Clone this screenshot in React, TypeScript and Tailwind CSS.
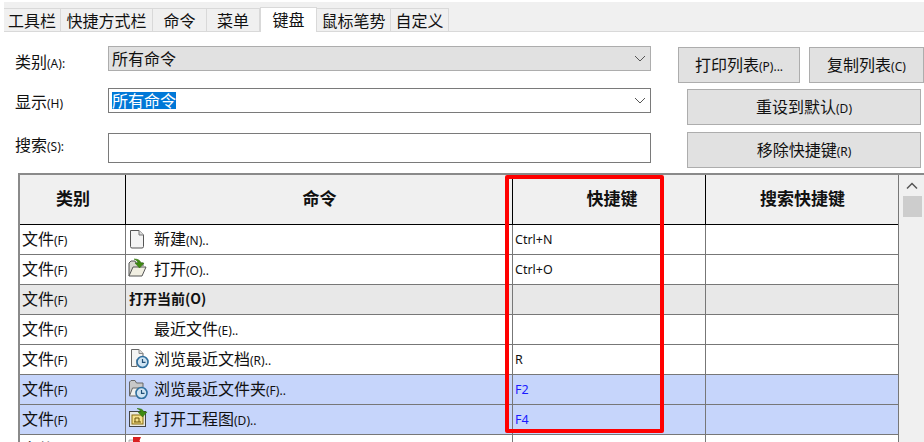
const font = { fontFamily: '"Noto Sans CJK SC", "Noto Sans", sans-serif' };

function L({ cn, en, className = "" }: { cn: string; en?: string; className?: string }) {
  return (
    <span className={`whitespace-nowrap ${className}`}>
      <span className="text-[16px]">{cn}</span>
      {en ? <span className="text-[12px] font-['Noto_Sans']">{en}</span> : null}
    </span>
  );
}

function Chevron() {
  return (
    <svg width="12" height="7" viewBox="0 0 12 7" className="shrink-0 mr-[1px]">
      <path d="M1 1l5 5 5-5" fill="none" stroke="#555" strokeWidth="1" />
    </svg>
  );
}

function PageIcon() {
  return (
    <svg width="18" height="20" viewBox="0 0 18 20" className="-mt-[2px]">
      <path d="M2.500 1.500h8.500l4.500 4.500v11.500a1.500 1.500 0 0 1-1.500 1.500H4a1.500 1.500 0 0 1-1.500-1.500z" fill="#f4f4f4" stroke="#555" />
      <path d="M11 1.500v4.500h4.500" fill="#ddd" stroke="#777" />
    </svg>
  );
}

function OpenIcon() {
  return (
    <svg width="22" height="20" viewBox="0 0 22 20" className="-ml-[2px] -mt-[3px]">
      <path d="M3 18V5l2-2h4l1 2h7v3" fill="#d8d8d0" stroke="#555" />
      <path d="M3 18l4-9h13l-4 9z" fill="#f1efe2" stroke="#555" />
      <path d="M8 1c4 0 6 1 7 4h3l-4.500 5L9 5h3c-.5-2-2-3-4-4z" fill="#3f8a12" stroke="#2f6d0c" strokeWidth=".5" />
    </svg>
  );
}

function Clock() {
  return (
    <g>
      <circle cx="13.500" cy="14" r="5.500" fill="#cfe3f2" stroke="#2f6f9f" strokeWidth="1.600" />
      <path d="M13.500 11v3.300h3" fill="none" stroke="#1f4f77" strokeWidth="1.200" />
    </g>
  );
}

function DocClockIcon() {
  return (
    <svg width="20" height="22" viewBox="0 0 20 22" className="ml-[1px] -mt-[2px]">
      <path d="M2.500 1.500h7.500l4 4v6H8v7H2.500z" fill="#f4f4f4" stroke="#666" />
      <path d="M10 1.500v4h4" fill="#ddd" stroke="#888" />
      <Clock />
    </svg>
  );
}

function FolderClockIcon() {
  return (
    <svg width="20" height="20" viewBox="0 0 20 20" className="-mt-[2px]">
      <path d="M1.500 17V3l1.500-1.500h4L8.500 4H15v4" fill="#c8c8c8" stroke="#666" />
      <path d="M1.500 17l3-8H15l-3 8z" fill="#f1f1ee" stroke="#666" />
      <Clock />
    </svg>
  );
}

function DrawingIcon() {
  return (
    <svg width="20" height="20" viewBox="0 0 20 20" className="-mt-[3px]">
      <rect x="1.500" y="3.500" width="16" height="15" fill="#e8e8e0" stroke="#444" />
      <rect x="4" y="7" width="11" height="9" fill="#f5e08a" stroke="#8a6d10" />
      <path d="M6 14h7M7 14v-4h4v4" fill="none" stroke="#6b5408" />
      <path d="M9 .5c4 0 6 1 7 3.500h3l-4.500 5L10 4h3c-.5-1.500-2-2.800-4-3.500z" fill="#3f8a12" stroke="#2f6d0c" strokeWidth=".5" />
    </svg>
  );
}

function RedIcon() {
  return (
    <svg width="14" height="18" viewBox="0 0 14 18" className="-mt-[9px]">
      <path d="M1 4h5v8H1z" fill="#eee" stroke="#888" strokeWidth=".6" />
      <path d="M5 1h8l-1.500 3.500L13 8H5z" fill="#d92020" />
    </svg>
  );
}

type Row = {
  cmd?: string;
  en?: string;
  icon?: React.ReactNode;
  key_?: string;
  kind?: "plain" | "group" | "hl";
};

const rows: Row[] = [
  { cmd: "新建", en: "(N)..", icon: <PageIcon />, key_: "Ctrl+N" },
  { cmd: "打开", en: "(O)..", icon: <OpenIcon />, key_: "Ctrl+O" },
  { cmd: "打开当前(O)", kind: "group" },
  { cmd: "最近文件", en: "(E).." },
  { cmd: "浏览最近文档", en: "(R)..", icon: <DocClockIcon />, key_: "R" },
  { cmd: "浏览最近文件夹", en: "(F)..", icon: <FolderClockIcon />, key_: "F2", kind: "hl" },
  { cmd: "打开工程图", en: "(D)..", icon: <DrawingIcon />, key_: "F4", kind: "hl" },
  { icon: <RedIcon /> },
];

const tabs = [
  { t: "工具栏", w: "w-[57px]" },
  { t: "快捷方式栏", w: "w-[92px]" },
  { t: "命令", w: "w-[54px]" },
  { t: "菜单", w: "w-[53px]" },
  { t: "键盘", w: "w-[57px]", active: true },
  { t: "鼠标笔势", w: "w-[74px]" },
  { t: "自定义", w: "w-[58px]" },
];

const cols = "grid grid-cols-[106px_387px_193px_193px]";

function Btn({ cn, en, className }: { cn: string; en: string; className: string }) {
  return (
    <div className={`h-[36px] flex items-center justify-center pb-[2px] bg-[#e1e1e1] border border-[#adadad] text-[#111] ${className}`}>
      <L cn={cn} en={en} />
    </div>
  );
}

export default function App() {
  return (
    <div style={font} className="relative w-[924px] h-[442px] overflow-hidden bg-white text-[#111] pt-[2px]">
      <div className="ml-[4px] h-[30px] bg-[#f0f0f0] border-b border-[#d9d9d9] flex items-end">
        {tabs.map((t) =>
          t.active ? (
            <div key={t.t} className={`${t.w} h-[25px] -mb-[1px] pb-[3px] bg-white border border-b-0 border-[#d9d9d9] flex items-center justify-center text-[16px]`}>
              {t.t}
            </div>
          ) : (
            <div key={t.t} className={`${t.w} h-[23px] border-t border-r border-[#d9d9d9] flex items-center justify-center text-[16px]`}>
              {t.t}
            </div>
          )
        )}
      </div>

      <div className="flex h-[141px]">
        <div className="w-[674px] pl-[15px] pt-[14px] flex flex-col">
          <div className="flex items-center h-[25px]">
            <L cn="类别" en="(A):" className="w-[93px] pt-[4px]" />
            <div className="w-[543px] h-[25px] bg-[#e1e1e1] border border-[#adadad] flex items-center justify-between pl-[3px] pr-[3px]">
              <span className="text-[16px] leading-[18px] pb-[2px]">所有命令</span>
              <Chevron />
            </div>
          </div>
          <div className="flex items-center h-[25px] mt-[17px]">
            <L cn="显示" en="(H)" className="w-[93px] pt-[1px]" />
            <div className="w-[543px] h-[25px] bg-white border border-[#7a7a7a] flex items-center justify-between pl-[3px] pr-[3px]">
              <span className="text-[16px] leading-[17px] bg-[#0078d7] text-white">所有命令</span>
              <Chevron />
            </div>
          </div>
          <div className="flex items-center h-[30px] mt-[20px]">
            <L cn="搜索" en="(S):" className="w-[93px] pb-[9px]" />
            <div className="w-[543px] h-[30px] bg-white border border-[#7a7a7a]" />
          </div>
        </div>
        <div className="flex flex-col pl-[4px] pt-[15px]">
          <div className="flex gap-[9px]">
            <Btn cn="打印列表" en="(P)..." className="w-[122px]" />
            <Btn cn="复制列表" en="(C)" className="w-[115px]" />
          </div>
          <Btn cn="重设到默认" en="(D)" className="w-[234px] ml-[9px] mt-[6px]" />
          <Btn cn="移除快捷键" en="(R)" className="w-[234px] ml-[9px] mt-[7px]" />
        </div>
      </div>

      <div className="ml-[18px] border-t-2 border-[#8a8a8a] flex">
        <div className="border-l-2 border-[#8a8a8a] border-r border-r-[#777] w-[881px] shrink-0">
          <div className={`${cols} h-[50px] pb-[3px] bg-[#f0f0f0] border-b border-black text-[17px] font-bold relative`}>
            <div className="flex items-center justify-center">类别</div>
            <div className="flex items-center justify-center">命令</div>
            <div className="flex items-center justify-center pl-[5px]">快捷键</div>
            <div className="flex items-center justify-center">搜索快捷键</div>
            <span className="absolute left-[105px] top-0 bottom-0 w-px bg-black" />
            <span className="absolute left-[492px] top-0 bottom-0 w-px bg-black" />
            <span className="absolute left-[685px] top-0 bottom-0 w-px bg-black" />
          </div>
          {rows.map((r, i) => {
            const bg = r.kind === "group" ? "bg-[#e8e8e8]" : r.kind === "hl" ? "bg-[#c6d5fb]" : "bg-white";
            return (
              <div key={i} className={`${cols} h-[30px] border-b border-[#777] ${bg}`}>
                <div className="border-r border-[#777] pl-[2px] pb-[3px] flex items-center">
                  <L cn="文件" en="(F)" />
                </div>
                <div className="border-r border-[#777] flex items-center">
                  {r.kind === "group" ? (
                    <span className="pl-[3px] pb-[3px] text-[14px] font-bold">{r.cmd}</span>
                  ) : (
                    <>
                      <span className="w-[28px] pl-[2px] flex items-center justify-start shrink-0">{r.icon}</span>
                      {r.cmd ? <L cn={r.cmd} en={r.en} className="pb-[3px]" /> : null}
                    </>
                  )}
                </div>
                <div className={`border-r border-[#777] pl-[2px] pt-[2px] flex items-center text-[12.5px] font-['Noto_Sans'] ${r.kind === "hl" ? "text-[#1a1aff]" : "text-[#111]"}`}>
                  {r.key_}
                </div>
                <div />
              </div>
            );
          })}
        </div>
        <div className="flex-1 bg-[#f0f0f0] flex flex-col items-center pl-[1px]">
          <svg width="12" height="8" viewBox="0 0 12 8" className="mt-[7px]">
            <path d="M1 6.500l5-5 5 5" fill="none" stroke="#555" strokeWidth="1.500" />
          </svg>
          <div className="w-[19px] h-[21px] mt-[6px] bg-[#cdcdcd]" />
        </div>
      </div>

      <div className="absolute left-[505px] top-[175px] w-[159px] h-[258px] border-[4px] border-[#ff0000] rounded-[2px]" />
    </div>
  );
}
